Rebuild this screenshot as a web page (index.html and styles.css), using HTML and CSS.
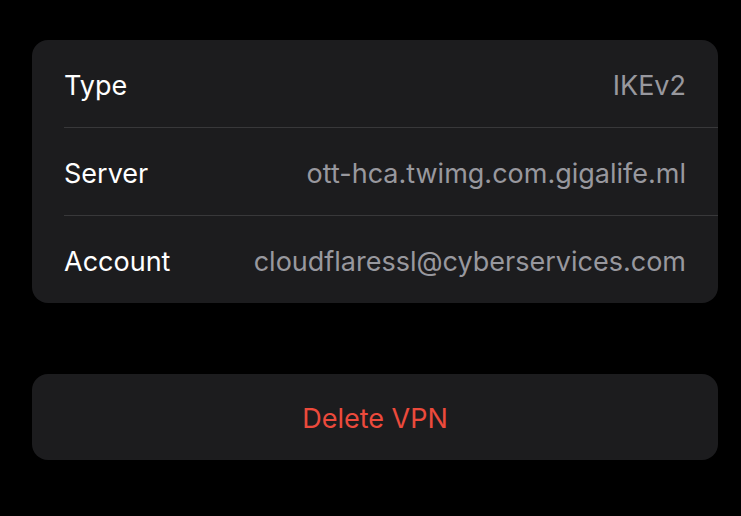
FILE: index.html
```html
<!DOCTYPE html>
<html>
<head>
<meta charset="utf-8">
<link rel="stylesheet" href="styles.css">
</head>
<body>
<div class="page">
  <div class="group">
    <div class="row"><span class="label">Type</span><span class="value">IKEv2</span></div>
    <div class="row"><span class="label">Server</span><span class="value">ott-hca.twimg.com.gigalife.ml</span></div>
    <div class="row"><span class="label">Account</span><span class="value">cloudflaressl@cyberservices.com</span></div>
  </div>
  <div class="group action">
    <span class="delete">Delete VPN</span>
  </div>
</div>
</body>
</html>
```

FILE: styles.css
```css
html, body {
  margin: 0;
  padding: 0;
  background: #000;
}
.page {
  padding: 40px 23px 0 32px;
  display: flex;
  flex-direction: column;
  gap: 71px;
  font-family: Inter, "Noto Sans", sans-serif;
}
.group {
  background: #1c1c1e;
  border-radius: 16px;
  overflow: hidden;
}
.row {
  height: 88px;
  margin-left: 32px;
  padding-right: 32px;
  padding-top: 4px;
  display: flex;
  align-items: center;
  justify-content: space-between;
  border-top: 1px solid #38383a;
  box-sizing: border-box;
}
.row:first-child {
  border-top: none;
  height: 87px;
}
.label {
  color: #fff;
  font-size: 27px;
}
.value {
  color: #98989e;
  font-size: 27px;
}
.action {
  height: 86px;
  padding-top: 3px;
  box-sizing: border-box;
  display: flex;
  align-items: center;
  justify-content: center;
}
.delete {
  color: #ec4a3c;
  font-size: 27px;
}
```
